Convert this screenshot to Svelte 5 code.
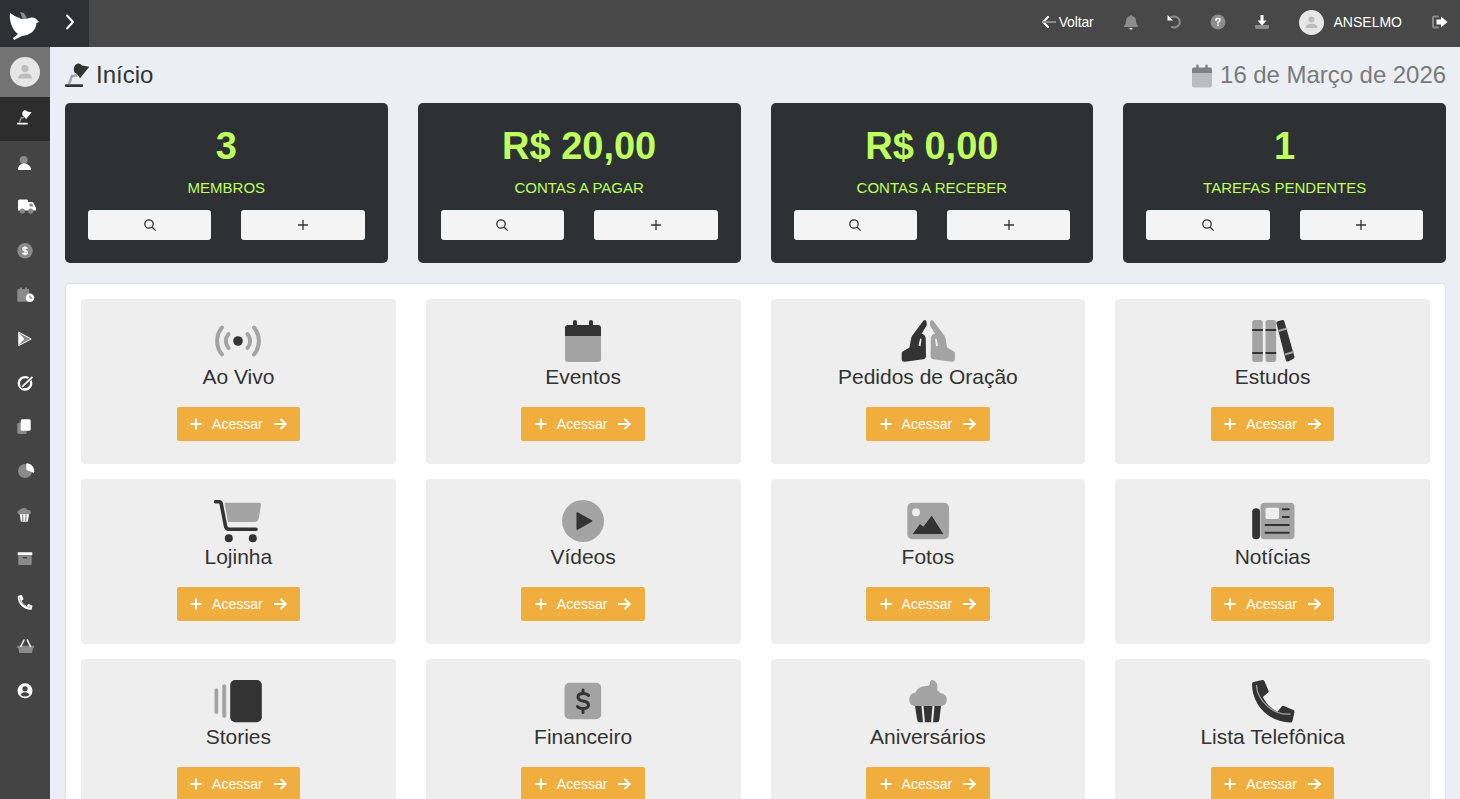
<script lang="ts">
  const stats = [
    { value: "3", label: "MEMBROS" },
    { value: "R$ 20,00", label: "CONTAS A PAGAR" },
    { value: "R$ 0,00", label: "CONTAS A RECEBER" },
    { value: "1", label: "TAREFAS PENDENTES" },
  ];

  const tiles = [
    { title: "Ao Vivo", icon: "live" },
    { title: "Eventos", icon: "calendar" },
    { title: "Pedidos de Oração", icon: "pray" },
    { title: "Estudos", icon: "books" },
    { title: "Lojinha", icon: "cart" },
    { title: "Vídeos", icon: "play" },
    { title: "Fotos", icon: "photo" },
    { title: "Notícias", icon: "news" },
    { title: "Stories", icon: "stories" },
    { title: "Financeiro", icon: "money" },
    { title: "Aniversários", icon: "cupcake" },
    { title: "Lista Telefônica", icon: "phone" },
  ];

  const sideItems = ["lamp", "person", "truck", "dollar", "schedule", "triangle", "compass", "copy", "pie", "cake", "archive", "call", "basket", "account"];

  const PHONE =
    "M497.39 361.8l-112-48a24 24 0 0 0-28 6.9l-49.6 60.6A370.66 370.66 0 0 1 130.6 204.11l60.6-49.6a23.94 23.94 0 0 0 6.9-28l-48-112A24.16 24.16 0 0 0 122.6.61l-104 24A24 24 0 0 0 0 48c0 256.5 207.9 464 464 464a24 24 0 0 0 23.4-18.6l24-104a24.29 24.29 0 0 0-14.01-27.6z";
</script>

{#snippet lamp()}
  <rect class="p" x="0" y="21.3" width="18" height="2.8" rx="1" />
  <path class="arm" d="M4 21 L7 13 L12 12.5" />
  <path class="p" d="M9.5 9.5 C8 6 9 1 13 .5 C15 .3 16 1.5 17 2.5 L24.3 3.7 L15 15.3 C14 13 12 11 9.5 9.5 Z" />
{/snippet}

{#snippet tileIcon(name: string)}
  <svg class="tile-icon" viewBox="0 0 48 48" width="48" height="48">
    {#if name === "live"}
      <circle class="p" cx="24" cy="23" r="4.8" />
      <path class="ring" d="M8 9.5 C1.5 17 1.5 29 8 36.5 M40 9.5 C46.5 17 46.5 29 40 36.5" />
      <path class="ring" d="M14.5 16 C11 20 11 26 14.5 30 M33.5 16 C37 20 37 26 33.5 30" />
    {:else if name === "calendar"}
      <path class="s" d="M6 18 H42 V41 Q42 44 39 44 H9 Q6 44 6 41 Z" />
      <path class="p" d="M6 18 V10 Q6 7 9 7 H14 V4 Q14 2 16 2 Q18 2 18 4 V7 H30 V4 Q30 2 32 2 Q34 2 34 4 V7 H39 Q42 7 42 10 V18 Z" />
    {:else if name === "pray"}
      <path class="p" fill-rule="evenodd" d="M19.5 2.5 Q21.5 1 22.5 3.5 L22.8 7 L17.5 16 Q20.5 15.5 21.7 20 L22 38 Q22 41 19 41.3 L1 43.7 Q-2.3 44 -2.3 41 L-2.3 35 Q-2.3 33.7 -1 33.2 L5.5 29.5 L7 21 Q7.3 19 8 18 Z M16 21 L14.5 27.5 L16.5 28.5 L17.5 21.5 Q16.8 20 16 21 Z" />
      <g transform="translate(48.6 0) scale(-1 1)">
        <path class="s" fill-rule="evenodd" d="M19.5 2.5 Q21.5 1 22.5 3.5 L22.8 7 L17.5 16 Q20.5 15.5 21.7 20 L22 38 Q22 41 19 41.3 L1 43.7 Q-2.3 44 -2.3 41 L-2.3 35 Q-2.3 33.7 -1 33.2 L5.5 29.5 L7 21 Q7.3 19 8 18 Z M16 21 L14.5 27.5 L16.5 28.5 L17.5 21.5 Q16.8 20 16 21 Z" />
      </g>
    {:else if name === "books"}
      <rect class="s" x="3.2" y="2" width="10.6" height="42" rx="2.5" />
      <rect class="s" x="16.5" y="2" width="10.6" height="42" rx="2.5" />
      <path class="p" d="M3.2 11 H13.8 V13 H3.2 Z M3.2 34 H13.8 V36 H3.2 Z M16.5 11 H27.2 V13 H16.5 Z M16.5 34 H27.2 V36 H16.5 Z" />
      <path class="p" d="M27.5 5.5 Q27 3.8 28.8 3.2 L33 2 Q34.8 1.6 35.4 3.4 L45.4 38.5 Q46 40.4 44 41 L39.2 43.4 Q37.3 44 36.8 42.2 Z" />
      <path class="band" d="M29.4 13 L38 10.5 M36 36.5 L44.6 34" />
    {:else if name === "cart"}
      <path class="s" d="M10.5 4.7 H45 Q47.4 4.7 47 7 L44.8 20 Q44.3 24 40.5 24 H14 Z" />
      <path class="p-line" d="M1.5 3.7 H5 Q6.8 3.7 7.2 5.6 L11.5 28 Q12 31.3 15 31.3 H42" />
      <circle class="p" cx="14.8" cy="40.3" r="4" />
      <circle class="p" cx="38.8" cy="40.3" r="4" />
    {:else if name === "play"}
      <circle class="s" cx="24" cy="23" r="21" />
      <path class="p tri" d="M18.2 15 L32.6 23 L18.2 31 Z" />
    {:else if name === "photo"}
      <rect class="s" x="3.3" y="4.7" width="41.7" height="36.6" rx="5" />
      <circle class="light" cx="12" cy="14.3" r="4" />
      <path class="p" d="M8.7 36 L16 26 L19.3 28.7 L27.7 17.7 L39.3 36 Z" />
    {:else if name === "news"}
      <rect class="s" x="11.5" y="4.7" width="34" height="36.6" rx="4" />
      <rect class="p" x="3.2" y="10.3" width="7.8" height="31" rx="3.6" />
      <rect class="light" x="16.5" y="9.7" width="13.5" height="11.3" rx="1.5" />
      <path class="p-thin" d="M33.8 11.3 H39.8 M33.8 19 H39.8 M16.5 27 H39.8 M16.5 34.7 H39.8" />
    {:else if name === "stories"}
      <rect class="s" x="0.5" y="10.3" width="3.7" height="25.7" rx="1.8" />
      <rect class="s" x="8.2" y="6.3" width="4" height="33.4" rx="2" />
      <rect class="p" x="16.2" y="2" width="31.6" height="42.3" rx="5" />
    {:else if name === "money"}
      <rect class="s" x="5.5" y="4.7" width="36.7" height="36.6" rx="5" />
      <path class="dollar" d="M29.5 17.5 Q28 15.5 24 15.5 Q19 15.5 19 19 Q19 22.3 24 23 Q29.5 23.8 29.5 27 Q29.5 30.5 24 30.5 Q19.8 30.5 18.5 28.5 M24 12 V15.5 M24 30.5 V34.5" />
    {:else if name === "cupcake"}
      <path class="p" d="M11 28 H37 L35.3 42 Q35 44.3 33 44.3 H15.5 Q13.5 44.3 13.2 42 Z" />
      <path class="light-line" d="M18.5 28 L20 44.5 M29.5 28 L28 44.5" />
      <path class="s" d="M10.5 28 Q5.3 27 5.3 21.5 Q5.3 15.5 11.5 14.5 Q13.5 8.5 22 8 Q26.5 8 26 4.5 Q25.8 2 28 2 Q33.5 3 33.5 9 Q33.5 10.5 33 12 Q35.5 13.5 36 15 Q42.7 16 42.7 21.5 Q42.7 27 37.5 28 Z" />
    {:else if name === "phone"}
      <path class="p" transform="translate(3 2) scale(.083)" d={PHONE} />
      <path class="grey-arc" d="M7.5 7 C8 22 24 38 41.5 36" />
    {/if}
  </svg>
{/snippet}

{#snippet sideIcon(name: string)}
  {#if name === "lamp"}
    <svg class="side-icon" viewBox="0 0 30 30" width="18" height="18">
      <g class="inv">{@render lamp()}</g>
    </svg>
  {:else}
    <svg class="side-icon" viewBox="0 0 18 18" width="18" height="18">
      {#if name === "person"}
        <circle class="sg" cx="6.7" cy="6" r="4" />
        <path class="sw" d="M1 16 C1 12 3.5 9.5 7 9.5 C11 9.5 14 12 14 16 Z" />
      {:else if name === "truck"}
        <path class="sw" d="M1 3 Q1 1.5 2.5 1.5 H10 Q11 1.5 11 3 V4 H15 Q16 4 16.5 5 L19 10 V12.5 H1 Z" />
        <path class="sg" d="M12.5 5.5 H15 L16.5 8.5 H12.5 Z" />
        <circle class="sg" cx="5.3" cy="13" r="2.6" />
        <circle class="sg" cx="13.7" cy="13" r="2.6" />
      {:else if name === "dollar"}
        <circle class="sg" cx="8" cy="8.7" r="7.7" />
        <path class="sd" d="M10.5 6.6 Q10 5.5 8 5.5 Q5.8 5.5 5.8 7 Q5.8 8.4 8 8.7 Q10.4 9 10.4 10.4 Q10.4 12 8 12 Q6 12 5.5 10.9 M8 4.2 V13.2" />
      {:else if name === "schedule"}
        <path class="sg" d="M.3 4 Q.3 3 1.3 3 H3 V1.6 H5 V3 H8 V1.6 H10 V3 H11.3 Q12.3 3 12.3 4 V15.7 H1.3 Q.3 15.7 .3 14.7 Z" />
        <circle class="sw" cx="13" cy="11.7" r="4.3" />
        <path class="hand" d="M13 9.5 V11.9 H15" />
      {:else if name === "triangle"}
        <path class="sg" d="M1.3 1.7 L14.7 9 L1.3 16 Z" />
        <path class="sw" d="M1.3 2 L7.4 9 L1.3 15.6 Z" />
        <path class="edge-w" d="M1.6 2 L14.2 9 L1.6 15.7" />
      {:else if name === "compass"}
        <circle class="ring-w" cx="8" cy="9.3" r="6.2" />
        <path class="slash-bg" d="M4.2 13.6 L14.8 3" />
        <path class="slash" d="M5 12.8 L15.5 2.8" />
      {:else if name === "copy"}
        <rect class="sg" x=".3" y="4.7" width="9.4" height="11.3" rx="1.5" />
        <rect class="sw" x="3.7" y="1.3" width="10" height="11.4" rx="1.5" />
      {:else if name === "pie"}
        <circle class="sg" cx="8" cy="9" r="7" />
        <path class="sw" d="M9.3 1.3 A7.7 7.7 0 0 1 17 11 L9.3 8 Z" />
      {:else if name === "cake"}
        <path class="sw" d="M2.7 8 H12 L10.8 15.7 H3.9 Z" />
        <path class="hand" d="M5.6 8.5 L6 15.5 M9 8.5 L8.6 15.5" />
        <path class="sg" d="M2 8.3 Q.3 8 .3 6.3 Q.3 4.5 2.5 4.2 Q3 2.8 5 2.5 Q7 1.7 7.5 1.7 Q9.5 2 10 3.8 Q13.8 4 14 6.3 Q14 8 12.5 8.3 Z" />
      {:else if name === "archive"}
        <rect class="sw" x=".7" y="2.3" width="14.6" height="2.9" rx=".5" />
        <path class="sg" d="M1.3 5.2 H14.7 V14 Q14.7 15 13.7 15 H2.3 Q1.3 15 1.3 14 Z" />
        <rect class="sdk" x="5.7" y="7" width="4.4" height="1.5" />
      {:else if name === "call"}
        <path class="sw" transform="translate(.7 1) scale(.0288)" d={PHONE} />
        <path class="hand thin" d="M2.5 3.5 C3 8.5 8 13.5 13.5 13.2" />
      {:else if name === "basket"}
        <path class="sg" d="M.3 7.8 H17 V10 H16 L15 15 H2.3 L1.3 10 H.3 Z" />
        <path class="ln-w" d="M3.8 8.5 L7 2 M13.5 8.5 L10.3 2" />
        <path class="hand" d="M5.8 11 V13.5 M8.7 11 V13.5 M11.6 11 V13.5" />
      {:else if name === "account"}
        <circle class="sw" cx="8" cy="8.7" r="7.5" />
        <circle class="sdk" cx="8" cy="6.8" r="2.6" />
        <path class="sdk" d="M3.6 13 Q4.5 10.3 8 10.3 Q11.5 10.3 12.4 13 Q10.5 14.6 8 14.6 Q5.5 14.6 3.6 13 Z" />
      {/if}
    </svg>
  {/if}
{/snippet}

{#snippet avatar(size: number)}
  <svg class="avatar" viewBox="0 0 30 30" width={size} height={size}>
    <circle cx="15" cy="15" r="15" fill="#e6e6e6" />
    <circle cx="15" cy="11.5" r="3.6" fill="#bcbcbc" />
    <path d="M8 21.5 Q8 16.5 15 16.5 Q22 16.5 22 21.5 Z" fill="#bcbcbc" />
  </svg>
{/snippet}

<div class="app">
  <header class="top">
    <div class="brand">
      <svg class="logo" viewBox="0 0 40 40" width="40" height="40">
        <path fill="#8c8c8c" d="M20 9 L24 10 L27 15 L23 17 Z" />
        <path fill="#fff" d="M10 10 C15 13 20 16.5 25 16 L30 15 C33 14 36 15 37 17 L39 19 L36.5 20 C36 28 30 32 22 33 L14 37 L13 35 L18 31 C12 27 9 17 10 10 Z" />
      </svg>
      <svg class="chevron" viewBox="0 0 10 16" width="10" height="16">
        <path d="M2 1.5 L8 8 L2 14.5" />
      </svg>
    </div>
    <div class="top-tools">
      <a class="back">
        <svg viewBox="0 0 14 12" width="14" height="12"><path class="hw" d="M6 1 L1.2 6 L6 11" /><path class="hg" d="M1.5 6 H14" /></svg>
        Voltar
      </a>
      <svg class="tool bell" viewBox="0 0 16 16" width="16" height="16">
        <path fill="#8c8c8c" d="M8 1 Q9 1 9 2 Q13 3 13 7 Q13 10 15 12 V13 H1 V12 Q3 10 3 7 Q3 3 7 2 Q7 1 8 1 Z" />
        <path fill="#fff" d="M6.3 14 H9.7 Q9.5 15.6 8 15.6 Q6.5 15.6 6.3 14 Z" />
      </svg>
      <svg class="tool undo" viewBox="0 0 16 16" width="16" height="16">
        <path class="hg" d="M4.5 3.5 Q8 1.5 11.5 3.5 Q15 6.5 13.2 10.5 Q10.5 14.5 6 13" />
        <path fill="#fff" d="M1.5 1 L7 6.5 H1.5 Z" />
      </svg>
      <svg class="tool help" viewBox="0 0 16 16" width="16" height="16">
        <circle cx="8" cy="8" r="7.5" fill="#8c8c8c" />
        <path class="hw thin" d="M6 6.3 Q6 4.4 8 4.4 Q10 4.4 10 6 Q10 7.2 8 8.2 V9" />
        <circle cx="8" cy="11.3" r="1" fill="#fff" />
      </svg>
      <svg class="tool get" viewBox="0 0 16 16" width="16" height="16">
        <path fill="#8c8c8c" d="M1 11 H15 V13.5 Q15 15 13.5 15 H2.5 Q1 15 1 13.5 Z" />
        <path fill="#fff" d="M6.5 1 H9.5 V6.5 H12.5 L8 11.5 L3.5 6.5 H6.5 Z" />
      </svg>
      <div class="user">
        {@render avatar(25)}
        <span>ANSELMO</span>
      </div>
      <svg class="tool logout" viewBox="0 0 16 14" width="16" height="14">
        <path class="hg" d="M6 1.5 H2.5 Q1 1.5 1 3 V11 Q1 12.5 2.5 12.5 H6" />
        <path fill="#fff" d="M9 1.5 L15.5 7 L9 12.5 V9.5 H4.5 V4.5 H9 Z" />
      </svg>
    </div>
  </header>

  <div class="below">
    <nav class="side">
      <div class="side-user">{@render avatar(30)}</div>
      {#each sideItems as item, i}
        <div class="side-item" class:active={i === 0}>{@render sideIcon(item)}</div>
      {/each}
    </nav>

    <main class="main">
      <div class="page-head">
        <h1>
          <svg class="head-lamp" viewBox="0 0 26 25" width="26" height="25">{@render lamp()}</svg>
          Início
        </h1>
        <div class="date">
          <svg viewBox="0 0 21 25" width="20" height="25">
            <path fill="#7d8185" d="M0 10 V6 Q0 4 2 4 H4.5 V2 Q4.5 1 5.8 1 Q7 1 7 2 V4 H14 V2 Q14 1 15.2 1 Q16.5 1 16.5 2 V4 H19 Q21 4 21 6 V10 Z" />
            <path fill="#b9bdc1" d="M0 10 H21 V23 Q21 25 19 25 H2 Q0 25 0 23 Z" />
          </svg>
          16 de Março de 2026
        </div>
      </div>

      <section class="stats">
        {#each stats as stat}
          <div class="stat">
            <div class="stat-value">{stat.value}</div>
            <div class="stat-label">{stat.label}</div>
            <div class="stat-actions">
              <button class="stat-btn" aria-label="Buscar">
                <svg viewBox="0 0 14 14" width="14" height="14"><circle cx="6" cy="6" r="4.2" /><path d="M9 9 L12.6 12.6" /></svg>
              </button>
              <button class="stat-btn" aria-label="Adicionar">
                <svg viewBox="0 0 14 14" width="14" height="14"><path d="M7 2 V12 M2 7 H12" /></svg>
              </button>
            </div>
          </div>
        {/each}
      </section>

      <section class="panel">
        {#each tiles as tile}
          <article class="tile">
            {@render tileIcon(tile.icon)}
            <h2>{tile.title}</h2>
            <button class="go">
              <svg viewBox="0 0 12 12" width="12" height="12"><path d="M6 .5 V11.5 M.5 6 H11.5" /></svg>
              <span>Acessar</span>
              <svg viewBox="0 0 14 12" width="14" height="12"><path d="M1 6 H12.5 M7.5 1 L12.7 6 L7.5 11" /></svg>
            </button>
          </article>
        {/each}
      </section>
    </main>
  </div>
</div>

<style>
  :global(body) {
    overflow: hidden;
    font-family: "Liberation Sans", Arial, sans-serif;
  }

  .app {
    height: 100vh;
    display: flex;
    flex-direction: column;
    overflow: hidden;
  }

  /* header */
  .top {
    flex: 0 0 47px;
    display: flex;
    justify-content: space-between;
    background: #484848;
    color: #fff;
    font-size: 14px;
  }

  .brand {
    width: 89px;
    background: #2d3134;
    display: flex;
    align-items: center;
    position: relative;
  }

  .logo {
    margin-left: 0;
    margin-top: -1px;
  }

  .chevron {
    margin-left: 25px;
    margin-top: -3px;
  }

  .chevron path {
    fill: none;
    stroke: #fff;
    stroke-width: 2;
    stroke-linecap: round;
    stroke-linejoin: round;
  }

  .top-tools {
    display: flex;
    align-items: center;
    padding-right: 12px;
    margin-top: -3px;
  }

  .back {
    display: flex;
    align-items: center;
    gap: 3px;
    letter-spacing: -0.15px;
  }

  .hw,
  .hg {
    fill: none;
    stroke-width: 2;
    stroke-linecap: round;
    stroke-linejoin: round;
  }

  .hw {
    stroke: #fff;
  }

  .hg {
    stroke: #8c8c8c;
  }

  .hw.thin {
    stroke-width: 1.6;
  }

  .tool {
    display: block;
  }

  .bell {
    margin-left: 29px;
  }

  .undo {
    margin-left: 27px;
  }

  .help {
    margin-left: 28px;
  }

  .get {
    margin-left: 28px;
  }

  .user {
    display: flex;
    align-items: center;
    gap: 10px;
    margin-left: 29px;
  }

  .avatar {
    display: block;
  }

  .logout {
    margin-left: 30px;
  }

  /* sidebar */
  .below {
    flex: 1;
    display: flex;
    min-height: 0;
  }

  .side {
    flex: 0 0 50px;
    background: #444;
  }

  .side-user {
    height: 50px;
    background: #737373;
    display: flex;
    align-items: center;
    justify-content: center;
  }

  .side-item {
    height: 44px;
    display: flex;
    align-items: center;
    padding-left: 17px;
  }

  .side-item.active {
    background: #2d2d2d;
  }

  .side-icon {
    display: block;
    overflow: visible;
  }

  .sg {
    fill: #8a8a8a;
  }

  .sw {
    fill: #fff;
  }

  .sdk {
    fill: #444;
  }

  .sd {
    fill: none;
    stroke: #fff;
    stroke-width: 1.4;
  }

  .hand {
    fill: none;
    stroke: #8a8a8a;
    stroke-width: 1.2;
  }

  .hand.thin {
    stroke-width: .7;
  }

  .edge-w {
    fill: none;
    stroke: #fff;
    stroke-width: 1;
  }

  .ring-w {
    fill: none;
    stroke: #fff;
    stroke-width: 2.4;
  }

  .slash-bg {
    fill: none;
    stroke: #444;
    stroke-width: 3.4;
  }

  .slash {
    fill: none;
    stroke: #fff;
    stroke-width: 1.6;
  }

  .ln-w {
    fill: none;
    stroke: #fff;
    stroke-width: 1.5;
    stroke-linecap: round;
  }

  .inv .p {
    fill: #fff;
  }

  .inv .arm {
    stroke: #9a9a9a;
  }

  /* content */
  .main {
    flex: 1;
    min-width: 0;
    background: #ebeef3;
    padding: 0 14px 0 15px;
  }

  .page-head {
    height: 56px;
    display: flex;
    align-items: center;
    justify-content: space-between;
  }

  h1 {
    margin: 0;
    display: flex;
    align-items: center;
    gap: 5px;
    font-size: 24px;
    font-weight: 400;
    color: #333;
  }

  .head-lamp {
    overflow: visible;
    margin-top: 1px;
  }

  .date {
    display: flex;
    align-items: center;
    gap: 8px;
    font-size: 24px;
    letter-spacing: -0.05px;
    color: #7a7a7a;
  }

  .stats {
    display: grid;
    grid-template-columns: repeat(4, 1fr);
    column-gap: 30px;
  }

  .stat {
    height: 160px;
    box-sizing: border-box;
    padding: 21px 23px 0;
    background: #2d3134;
    border-radius: 5px;
    text-align: center;
    color: #bfff5f;
  }

  .stat-value {
    font-size: 38px;
    line-height: 44px;
    font-weight: 700;
  }

  .stat-label {
    margin-top: 10px;
    font-size: 15px;
    line-height: 20px;
  }

  .stat-actions {
    margin-top: 12px;
    display: grid;
    grid-template-columns: 1fr 1fr;
    column-gap: 30px;
  }

  .stat-btn {
    height: 30px;
    padding: 0;
    border: 0;
    border-radius: 3px;
    background: #f4f4f4;
    display: flex;
    align-items: center;
    justify-content: center;
  }

  .stat-btn svg {
    fill: none;
    stroke: #333;
    stroke-width: 1.3;
  }

  .panel {
    margin-top: 20px;
    padding: 15px;
    background: #fff;
    border: 1px solid #dcdfe3;
    border-radius: 4px;
    display: grid;
    grid-template-columns: repeat(4, 1fr);
    gap: 15px 30px;
  }

  .tile {
    height: 165px;
    box-sizing: border-box;
    padding-top: 19px;
    background: #eee;
    border-radius: 4px;
    display: flex;
    flex-direction: column;
    align-items: center;
  }

  .tile-icon {
    display: block;
    flex: none;
    overflow: visible;
  }

  .p {
    fill: #333;
  }

  .s {
    fill: #a3a3a3;
  }

  .light {
    fill: #eee;
  }

  .tri {
    stroke: #333;
    stroke-width: 1.5;
    stroke-linejoin: round;
  }

  .ring {
    fill: none;
    stroke: #a3a3a3;
    stroke-width: 4;
    stroke-linecap: round;
  }

  .arm {
    fill: none;
    stroke: #a3a3a3;
    stroke-width: 2.4;
    stroke-linejoin: round;
  }

  .band {
    fill: none;
    stroke: #a3a3a3;
    stroke-width: 2;
  }

  .p-line {
    fill: none;
    stroke: #333;
    stroke-width: 3.6;
    stroke-linecap: round;
  }

  .p-thin {
    fill: none;
    stroke: #333;
    stroke-width: 2;
    stroke-linecap: round;
  }

  .dollar {
    fill: none;
    stroke: #333;
    stroke-width: 3;
    stroke-linecap: round;
    stroke-linejoin: round;
  }

  .light-line {
    fill: none;
    stroke: #eee;
    stroke-width: 2;
  }

  .grey-arc {
    fill: none;
    stroke: #a3a3a3;
    stroke-width: 1.3;
  }

  h2 {
    margin: 0;
    font-size: 21px;
    line-height: 22px;
    font-weight: 400;
    color: #333;
  }

  .go {
    margin-top: 19px;
    width: 123.5px;
    height: 34px;
    padding: 0;
    border: 0;
    border-radius: 2px;
    background: #f0ae3e;
    color: #fff;
    font: 14px "Liberation Sans", Arial, sans-serif;
    display: flex;
    align-items: center;
    justify-content: center;
    gap: 10px;
  }

  .go svg {
    fill: none;
    stroke: #fff;
    stroke-width: 2;
  }
</style>
